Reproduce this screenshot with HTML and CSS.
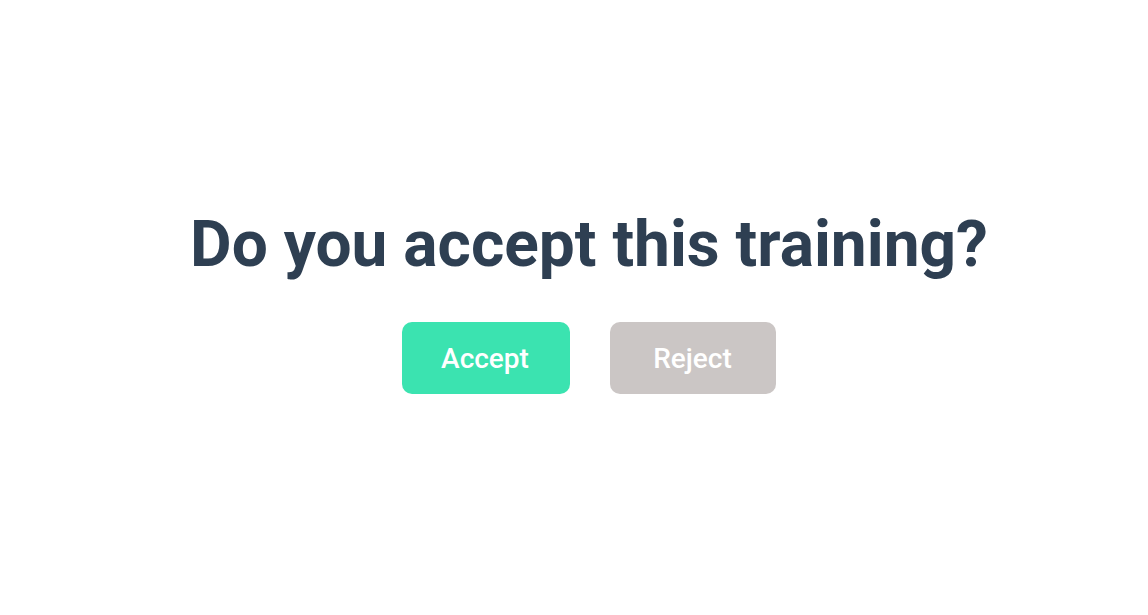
FILE: index.html
```html
<!DOCTYPE html>
<html lang="en">
<head>
<meta charset="utf-8">
<title>Training</title>
<link rel="stylesheet" href="styles.css">
</head>
<body>
<main class="prompt">
  <h1 class="prompt-title">Do you accept this training?</h1>
  <div class="actions">
    <button class="btn btn-accept" type="button">Accept</button>
    <button class="btn btn-reject" type="button">Reject</button>
  </div>
</main>
</body>
</html>
```
FILE: styles.css
```css
* {
  box-sizing: border-box;
}

body {
  margin: 0;
  background: #fff;
  font-family: Roboto, sans-serif;
}

.prompt {
  display: flex;
  flex-direction: column;
  align-items: center;
  width: 1178px;
  padding-top: 207px;
}

.prompt-title {
  margin: 0;
  color: #2e3f52;
  font-size: 64px;
  font-weight: 700;
  line-height: 76px;
  white-space: nowrap;
}

.actions {
  display: flex;
  gap: 40px;
  margin-top: 39px;
}

.btn {
  height: 72px;
  padding: 0;
  border: 0;
  border-radius: 10px;
  color: #fff;
  font-family: inherit;
  font-size: 28px;
  font-weight: 500;
}

.btn-accept {
  width: 168px;
  padding-right: 2px;
  background: #3be3b0;
}

.btn-reject {
  width: 166px;
  padding-right: 1px;
  background: #cbc6c5;
}
```
